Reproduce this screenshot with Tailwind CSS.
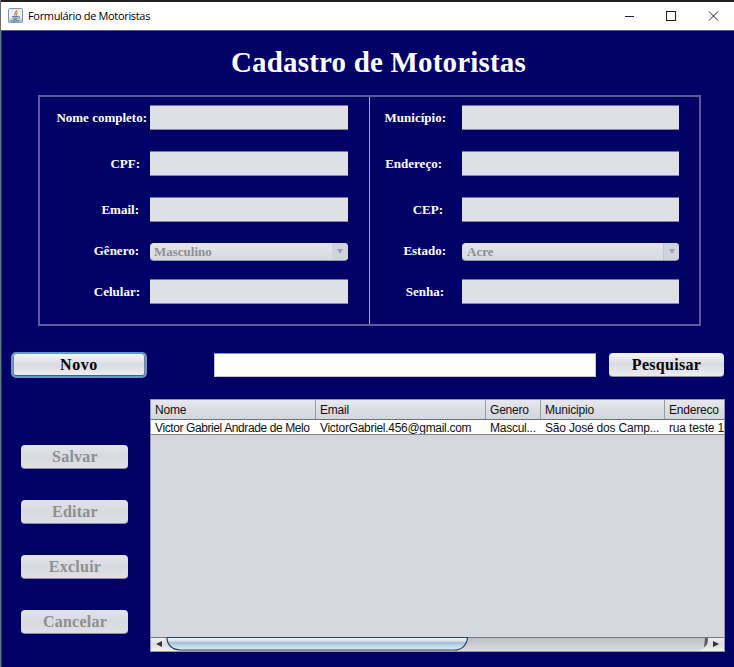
<!DOCTYPE html>
<html lang="pt-BR">
<head>
<meta charset="utf-8">
<title>Formulário de Motoristas</title>
<script src="https://cdn.jsdelivr.net/npm/@tailwindcss/browser@4"></script>
</head>
<body class="w-[734px] h-[667px] overflow-hidden bg-[#000066] flex flex-col border-l border-[#6d6f70]">
<header class="h-[31px] shrink-0 flex items-center bg-white border-t-[2px] border-t-[#222220] border-b border-b-[#56568a] pl-[7px]">
  <svg class="w-[15px] h-[15px] shrink-0 mb-px" viewBox="0 0 15 15">
    <defs><linearGradient id="ic" x1="0" y1="0" x2="0" y2="1"><stop offset="0" stop-color="#dfe9f0"/><stop offset=".5" stop-color="#fafcfd"/><stop offset="1" stop-color="#9db3c6"/></linearGradient></defs>
    <rect x=".5" y=".5" width="14" height="14" rx="1" fill="url(#ic)" stroke="#7f99b0"/>
    <path d="M8.600 2.200C9 4 5.300 4.700 6.900 7.400M9.800 4.500C7.600 5.400 8.800 6.300 7.900 7.600" fill="none" stroke="#e5722b" stroke-width="1.2"/>
    <path d="M4 8.400h6.200M4.600 10h5M10.300 8.400c2-.3 1.600 1.600-.3 1.900M5.400 11.300h3.600M3.200 12.600c2 .7 6.200.6 8-.2" fill="none" stroke="#50779c"/>
  </svg>
  <span class="ml-[5px] text-[11px] leading-[16px] text-black whitespace-nowrap tracking-[-0.33px] font-['Open_Sans','Noto_Sans',sans-serif]">Formulário de Motoristas</span>
  <svg class="ml-auto mr-[15px] w-[96px] h-[12px] mb-px" viewBox="0 0 96 12" fill="none" stroke="#222" shape-rendering="crispEdges"><path d="M2 6.500h9"/><rect x="43.5" y="1.5" width="9" height="9"/><path d="M86 1.500l9 9M95 1.500l-9 9" shape-rendering="auto"/></svg>
</header>

<main class="flex-1 min-h-0 border-l border-[#173a7c] font-['Liberation_Serif',serif] font-bold">
  <h1 class="pt-[14px] pl-[229px] h-[64px] text-[29px] leading-[34px] tracking-[0.18px] text-white whitespace-nowrap">Cadastro de Motoristas</h1>

  <section class="ml-[36px] w-[663px] h-[231px] border-2 border-[#5c5c98] flex text-[13px] leading-[16px] text-white whitespace-nowrap">
    <div class="w-[329px] pt-[8px] flex flex-col">
      <div class="h-[46px] flex"><span class="w-[110px] pt-[5px] pr-[3px] text-right">Nome completo:</span><i class="w-[198px] h-[25px] bg-[#dee0e5] border-y border-t-[#73749b] border-b-[#8587ae]"></i></div>
      <div class="h-[46px] flex"><span class="w-[110px] pt-[5px] pr-[10px] text-right">CPF:</span><i class="w-[198px] h-[25px] bg-[#dee0e5] border-y border-t-[#73749b] border-b-[#8587ae]"></i></div>
      <div class="h-[46px] flex"><span class="w-[110px] pt-[5px] pr-[11px] text-right">Email:</span><i class="w-[198px] h-[25px] bg-[#dee0e5] border-y border-t-[#73749b] border-b-[#8587ae]"></i></div>
      <div class="h-[36px] flex"><span class="w-[110px] pr-[11px] text-right">Gênero:</span>
        <div class="w-[198px] h-[18px] rounded-[4px] overflow-hidden border-b border-[#9496ae] bg-gradient-to-b from-[#e5e5ec] to-[#d7dae0] flex text-[#8e8f91]"><span class="pl-[4px] pt-px flex-1">Masculino</span><b class="w-[16px] bg-[#cfd4df] flex items-center justify-center"><svg class="w-[6px] h-[5px]" viewBox="0 0 6 5"><path d="M0 0h6L3 5z" fill="#9da2ac"/></svg></b></div></div>
      <div class="h-[36px] flex"><span class="w-[110px] pt-[5px] pr-[10px] text-right">Celular:</span><i class="w-[198px] h-[25px] bg-[#dee0e5] border-y border-t-[#73749b] border-b-[#8587ae]"></i></div>
    </div>
    <div class="border-l border-[#a6a6c6] flex-1 pt-[8px] flex flex-col">
      <div class="h-[46px] flex"><span class="w-[92px] pt-[5px] pr-[16px] text-right">Município:</span><i class="w-[217px] h-[25px] bg-[#dee0e5] border-y border-t-[#73749b] border-b-[#8587ae]"></i></div>
      <div class="h-[46px] flex"><span class="w-[92px] pt-[5px] pr-[20px] text-right">Endereço:</span><i class="w-[217px] h-[25px] bg-[#dee0e5] border-y border-t-[#73749b] border-b-[#8587ae]"></i></div>
      <div class="h-[46px] flex"><span class="w-[92px] pt-[5px] pr-[19px] text-right">CEP:</span><i class="w-[217px] h-[25px] bg-[#dee0e5] border-y border-t-[#73749b] border-b-[#8587ae]"></i></div>
      <div class="h-[36px] flex"><span class="w-[92px] pr-[16px] text-right">Estado:</span>
        <div class="w-[217px] h-[18px] rounded-[4px] overflow-hidden border-b border-[#9496ae] bg-gradient-to-b from-[#e5e5ec] to-[#d7dae0] flex text-[#8e8f91]"><span class="pl-[5px] pt-px flex-1">Acre</span><b class="w-[16px] bg-[#cfd4df] border-l border-[#c2c6d0] flex items-center justify-center"><svg class="w-[6px] h-[5px]" viewBox="0 0 6 5"><path d="M0 0h6L3 5z" fill="#9da2ac"/></svg></b></div></div>
      <div class="h-[36px] flex"><span class="w-[92px] pt-[5px] pr-[18px] text-right">Senha:</span><i class="w-[217px] h-[25px] bg-[#dee0e5] border-y border-t-[#73749b] border-b-[#8587ae]"></i></div>
    </div>
  </section>

  <section class="flex items-start mt-[26px] h-[47px] pl-[9px] text-[16px] tracking-[0.3px]">
    <button class="w-[136px] h-[26px] rounded-[5px] border-2 border-[#6298cc] bg-gradient-to-b from-[#f4f5f7] via-[#d9dbe1] to-[#eff0f4] shadow-[inset_0_-1px_0_#545a6b,inset_1px_0_0_#7c8496,inset_-1px_0_0_#7c8496] leading-[22px] text-black tracking-[0.6px]">Novo</button>
    <input aria-label="Pesquisa" class="ml-[67px] mt-px w-[382px] h-[24px] bg-white border border-t-[#8a8c96] border-x-[#c4c5cc] border-b-[#c4c5cc]">
    <button class="ml-[13px] mt-px w-[115px] h-[24px] rounded-[4px] border-b border-[#8b8ca4] bg-gradient-to-b from-[#f4f5f7] via-[#d9dbe1] to-[#ebedf1] leading-[23px] text-black">Pesquisar</button>
  </section>

  <section class="flex">
    <div class="w-[148px] pl-[19px] pt-[46px] flex flex-col gap-[31px] text-[16px] leading-[22px] tracking-[0.25px] text-[#8e8f91]">
      <button class="w-[107px] h-[24px] pl-px rounded-[4px] border-b border-[#8b8ca4] bg-gradient-to-b from-[#e2e4e9] via-[#d8dae0] to-[#dfe0e6]">Salvar</button>
      <button class="w-[107px] h-[24px] pl-px rounded-[4px] border-b border-[#8b8ca4] bg-gradient-to-b from-[#e2e4e9] via-[#d8dae0] to-[#dfe0e6]">Editar</button>
      <button class="w-[107px] h-[24px] pl-px rounded-[4px] border-b border-[#8b8ca4] bg-gradient-to-b from-[#e2e4e9] via-[#d8dae0] to-[#dfe0e6]">Excluir</button>
      <button class="w-[107px] h-[24px] pl-px rounded-[4px] border-b border-[#8b8ca4] bg-gradient-to-b from-[#e2e4e9] via-[#d8dae0] to-[#dfe0e6]">Cancelar</button>
    </div>
    <div class="w-[575px] h-[253px] border border-[#94959d] bg-[#d7d8de] flex flex-col font-normal font-['Liberation_Sans',sans-serif] text-[12px] text-[#111] whitespace-nowrap">
      <div class="h-[20px] shrink-0 grid grid-cols-[165px_170px_55px_124px_59px] bg-gradient-to-b from-[#e8e9ed] via-[#dcdde3] to-[#d5d7de] border-b border-[#707178] leading-[20px] tracking-[-0.2px] overflow-hidden">
        <span class="pl-[4px] border-r border-[#9a9ca5]">Nome</span><span class="pl-[4px] border-r border-[#9a9ca5]">Email</span><span class="pl-[4px] border-r border-[#9a9ca5]">Genero</span><span class="pl-[4px] border-r border-[#9a9ca5]">Municipio</span><span class="pl-[4px]">Endereco</span>
      </div>
      <div class="h-[15px] shrink-0 grid grid-cols-[165px_170px_55px_124px_59px] bg-white border-b border-[#85868c] leading-[17px] overflow-hidden">
        <span class="pl-[4px] tracking-[-0.4px]">Victor Gabriel Andrade de Melo</span><span class="pl-[4px] tracking-[-0.3px]">VictorGabriel.456@gmail.com</span><span class="pl-[4px] tracking-[-0.25px]">Mascul...</span><span class="pl-[4px] tracking-[-0.2px]">São José dos Camp...</span><span class="pl-[4px] tracking-[-0.15px] overflow-hidden">rua teste 12</span>
      </div>
      <div class="flex-1"></div>
      <svg class="w-[573px] h-[15px] shrink-0" viewBox="0 0 573 15">
        <defs>
          <linearGradient id="tr" x1="0" y1="0" x2="0" y2="1"><stop offset="0" stop-color="#b9bbc2"/><stop offset="1" stop-color="#dcdde3"/></linearGradient>
          <linearGradient id="th" x1="0" y1="0" x2="0" y2="1"><stop offset="0" stop-color="#f2f7fb"/><stop offset=".3" stop-color="#d3e0ec"/><stop offset=".4" stop-color="#a9c1d6"/><stop offset="1" stop-color="#ddf0fb"/></linearGradient>
          <linearGradient id="bt" x1="0" y1="0" x2="0" y2="1"><stop offset="0" stop-color="#eeeff2"/><stop offset=".5" stop-color="#dcdde2"/><stop offset="1" stop-color="#f0f1f4"/></linearGradient>
        </defs>
        <path d="M0 1h573v14H0z" fill="url(#tr)"/>
        <path d="M0 1.500h573" stroke="#777981"/>
        <path d="M0 2h15.500c0 6 4 11 11 13H0z" fill="url(#bt)"/>
        <path d="M573 2h-16c0 6-2 10-9 13h25z" fill="url(#bt)"/>
        <path d="M557 2c0 5-1 7-4 9.500l1-9.500z" fill="#5c5e66"/>
        <path d="M16 1.500H316.500C316 9 311 14 303 14H30C21 14 16 9 16 1.500z" fill="url(#th)" stroke="#29435c" stroke-width="1.2"/>
        <path d="M5 8l6-3v6zM568 8l-6-3v6z" fill="#333"/>
      </svg>
    </div>
  </section>
</main>
</body>
</html>
